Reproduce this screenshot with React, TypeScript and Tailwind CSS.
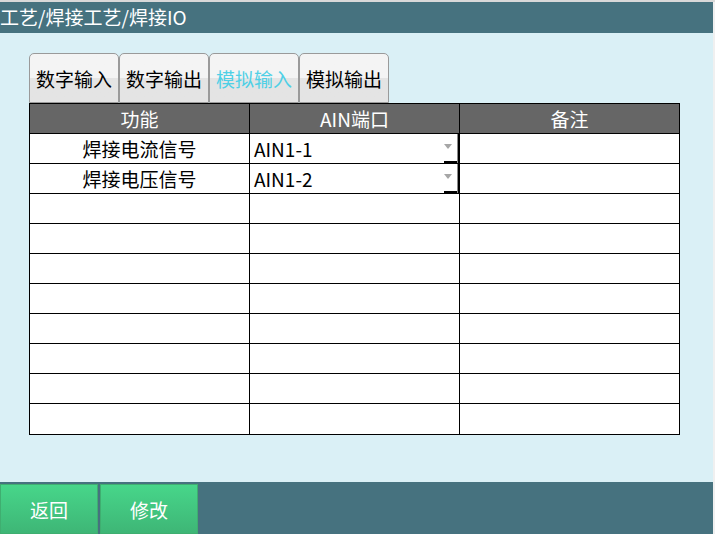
import React from "react";

const tabs = ["数字输入", "数字输出", "模拟输入", "模拟输出"];

const rows: { name: string; port: string }[] = [
  { name: "焊接电流信号", port: "AIN1-1" },
  { name: "焊接电压信号", port: "AIN1-2" },
  ...Array.from({ length: 8 }, () => ({ name: "", port: "" })),
];

const font = {
  fontFamily: '"Noto Sans CJK SC", "Noto Sans", sans-serif',
};

export default function App() {
  return (
    <div
      className="w-[715px] h-[534px] flex flex-col bg-[#f0f0f0] overflow-hidden text-[19px] leading-none"
      style={font}
    >
      <div className="h-[2px] shrink-0 bg-[#d9d9d9]" />
      <div className="flex-1 flex flex-col w-[713px]">
        {/* header */}
        <div className="h-[31px] shrink-0 bg-[#46727f] text-white flex items-center">
          <span className="-mt-[2px]">工艺/焊接工艺/焊接IO</span>
        </div>

        {/* content */}
        <div className="flex-1 bg-[#daf0f6] pl-[29px] pt-[20px]">
          <div className="flex h-[50px]">
            {tabs.map((t, i) => (
              <div
                key={t}
                className={`w-[90px] h-[50px] border border-[#9a9a9a] rounded-t-[5px] bg-gradient-to-b from-[#f4f4f4] from-50% to-[#e4e4e4] to-50% flex items-center justify-center pt-[1px] ${
                  i === 2 ? "text-[#4fd0e6]" : "text-black"
                }`}
              >
                {t}
              </div>
            ))}
          </div>

          <div className="w-[651px] border border-black bg-white">
            <div className="grid grid-cols-[220px_210px_1fr] h-[30px] bg-[#666666] text-white border-b border-black">
              <div className="flex items-center justify-center border-r border-black">功能</div>
              <div className="flex items-center justify-center border-r border-black">AIN端口</div>
              <div className="flex items-center justify-center">备注</div>
            </div>
            {rows.map((r, i) => (
              <div
                key={i}
                className={`grid grid-cols-[220px_210px_1fr] h-[30px] text-black ${
                  i < rows.length - 1 ? "border-b border-black" : ""
                }`}
              >
                <div className="flex items-center justify-center border-r border-black">{r.name}</div>
                <div
                  className={`relative flex items-center pl-[4px] border-r border-black ${
                    r.port ? "border-r-2" : ""
                  }`}
                >
                  {r.port}
                  {r.port && (
                    <>
                      <svg
                        width="8"
                        height="5"
                        viewBox="0 0 8 5"
                        className="absolute right-[6px] top-[10px]"
                      >
                        <path d="M0 0H8L4 5Z" fill="#a6a6a6" />
                      </svg>
                      <div className="absolute right-0 bottom-0 w-[14px] h-[2px] bg-black" />
                      <div className="absolute right-0 top-0 bottom-0 w-px bg-[#8a8a8a]" />
                    </>
                  )}
                </div>
                <div />
              </div>
            ))}
          </div>
        </div>

        {/* footer */}
        <div className="h-[52px] shrink-0 bg-[#46727f] flex gap-[2px] pt-[2px]">
          {["返回", "修改"].map((b) => (
            <div
              key={b}
              className="w-[98px] h-full bg-gradient-to-b from-[#47d68a] to-[#3eb676] border border-[#3fae70] text-white flex items-center justify-center"
            >
              {b}
            </div>
          ))}
        </div>
      </div>
    </div>
  );
}
